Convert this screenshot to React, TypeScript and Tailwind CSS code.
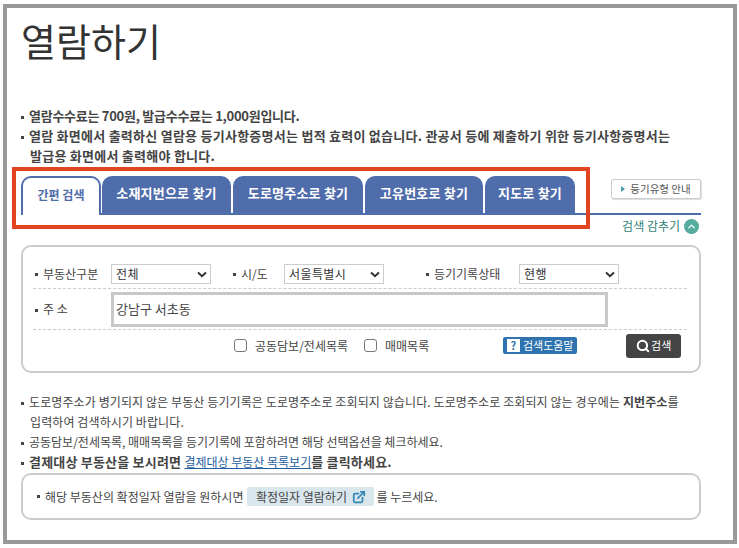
import React from 'react';
import { ChevronUp, ExternalLink, Search } from 'lucide-react';

const FONT = "font-['Noto_Sans_CJK_KR','Noto_Sans',sans-serif]";

const TABS = [
  { label: '소재지번으로 찾기', box: 'ml-[1px] w-[129px]' },
  { label: '도로명주소로 찾기', box: 'ml-[2px] w-[130px]' },
  { label: '고유번호로 찾기', box: 'ml-[2px] w-[118px]' },
  { label: '지도로 찾기', box: 'ml-[2px] w-[90px]' },
];

const Bullet = () => <span className="mr-[5px] inline-block h-[3px] w-[3px] bg-[#444] align-middle" />;

const FakeSelect = ({ value, width }: { value: string; width: string }) => (
  <div className={`flex h-[20px] ${width} items-center justify-between border border-[#ccc] pl-[4px] pr-[2px] text-[12px] tracking-[0.4px] text-[#333]`}>
    <span>{value}</span>
    <svg width="10" height="7" viewBox="0 0 10 7" className="mr-[1px]">
      <path d="M1 1.5 L5 5.2 L9 1.5" fill="none" stroke="#333" strokeWidth="2" />
    </svg>
  </div>
);

const Check = ({ label }: { label: string }) => (
  <label className="flex items-center gap-[8px] text-[12px] text-[#444]">
    <span className="h-[13px] w-[13px] rounded-[3px] border border-[#777] bg-white" />
    {label}
  </label>
);

export default function App() {
  return (
    <div className={`${FONT} relative h-[548px] w-[739px] overflow-hidden bg-white pl-[3px] pt-[4px]`}>
      <div className="h-[540px] w-[734px] border-4 border-[#999] bg-white pl-[14px] pr-[32px]">
        <h1 className="mt-[6px] text-[38px] font-normal leading-[52px] text-[#333]">열람하기</h1>

        <ul className="mt-[40px] text-[13px] font-bold leading-[20px] text-[#444]">
          <li className="pl-[9px] -indent-[9px] tracking-[-0.27px]"><Bullet />열람수수료는 700원, 발급수수료는 1,000원입니다.</li>
          <li className="pl-[9px] -indent-[9px] tracking-[0.25px]">
            <Bullet />열람 화면에서 출력하신 열람용 등기사항증명서는 법적 효력이 없습니다. 관공서 등에 제출하기 위한 등기사항증명서는
            <br />발급용 화면에서 출력해야 합니다.
          </li>
        </ul>

        <div className="mt-[10px] flex items-end border-b-2 border-[#4f6cab]">
          <div className="relative z-10 -mb-[2px] flex h-[39px] w-[80px] items-start justify-center rounded-t-[10px] border-2 border-b-0 border-[#4f6cab] bg-white pt-[8px] text-[12px] font-bold text-[#4f6cab]">
            간편 검색
          </div>
          {TABS.map((tab) => (
            <div key={tab.label} className={`flex h-[37px] ${tab.box} items-start justify-center rounded-t-[10px] bg-[#4f6cab] pt-[7px] text-[13px] font-bold tracking-[0.2px] text-white`}>
              {tab.label}
            </div>
          ))}
          <div className="mb-[14px] ml-auto flex h-[20px] w-[90px] items-center justify-center gap-[5px] rounded-[2px] border border-[#ccc] text-[10.5px] text-[#555] shadow-[1px_1px_1px_#ddd]">
            <span className="h-0 w-0 border-y-[3px] border-l-[4px] border-y-transparent border-l-[#4a9bb0]" />
            등기유형 안내
          </div>
        </div>

        <div className="mt-[2px] flex items-center justify-end gap-[4px] pr-[2px] text-[12px] leading-[18px] text-[#2f7f78]">
          검색 감추기
          <span className="flex h-[15px] w-[15px] items-center justify-center rounded-full bg-[#55ab9c]">
            <ChevronUp size={11} strokeWidth={3} className="text-white" />
          </span>
        </div>

        <div className="mt-[10px] h-[128px] rounded-[10px] border-2 border-[#ccc] pl-[10px] pr-[12px] pt-[17px] text-[12px] text-[#444]">
          <div className="flex h-[25px] items-start border-b border-dashed border-[#ccc]">
            <span className="flex h-[20px] w-[78px] items-center pl-[2px]"><Bullet />부동산구분</span>
            <FakeSelect value="전체" width="w-[100px]" />
            <span className="ml-[22px] flex h-[20px] w-[51px] items-center"><Bullet />시/도</span>
            <FakeSelect value="서울특별시" width="w-[100px]" />
            <span className="ml-[42px] flex h-[20px] w-[93px] items-center"><Bullet />등기기록상태</span>
            <FakeSelect value="현행" width="w-[100px]" />
          </div>
          <div className="flex h-[41px] items-center border-b border-dashed border-[#ccc]">
            <span className="w-[78px] pl-[2px]"><Bullet />주 소</span>
            <div className="flex h-[35px] w-[497px] items-center border-[3px] border-[#c8c8c8] pl-[2px] text-[13px] text-[#444]">강남구 서초동</div>
          </div>
          <div className="flex h-[31px] items-center">
            <div className="ml-[201px] flex gap-[16px]">
              <Check label="공동담보/전세목록" />
              <Check label="매매목록" />
            </div>
            <div className="ml-[74px] flex h-[17px] w-[74px] items-center justify-center gap-[3px] rounded-[2px] bg-[#2f74b0] text-[11px] text-white">
              <span className="flex h-[13px] w-[13px] items-center justify-center bg-white text-[11px] font-bold leading-none text-[#2f74b0]">?</span>
              검색도움말
            </div>
            <div className="ml-[49px] flex h-[24px] w-[55px] items-center justify-center gap-[1px] rounded-[3px] bg-[#444] text-[11px] text-white">
              <Search size={14} strokeWidth={3.5} />
              검색
            </div>
          </div>
        </div>

        <ul className="mt-[19px] text-[12px] leading-[20px] text-[#444]">
          <li className="pl-[9px] -indent-[9px] tracking-[0.1px]">
            <Bullet />도로명주소가 병기되지 않은 부동산 등기기록은 도로명주소로 조회되지 않습니다. 도로명주소로 조회되지 않는 경우에는 <b>지번주소</b>를
            <br />입력하여 검색하시기 바랍니다.
          </li>
          <li className="pl-[9px] -indent-[9px]"><Bullet />공동담보/전세목록, 매매목록을 등기기록에 포함하려면 해당 선택옵션을 체크하세요.</li>
          <li className="pl-[9px] -indent-[9px] text-[13px] font-bold tracking-[0.2px]">
            <Bullet />결제대상 부동산을 보시려면 <a className="text-[12px] font-normal tracking-normal text-[#1f5f9f] underline">결제대상 부동산 목록보기</a>를 클릭하세요.
          </li>
        </ul>

        <div className="mt-[1px] flex h-[47px] items-center rounded-[10px] border-2 border-[#ccc] pl-[14px] text-[12px] text-[#444]">
          <Bullet />해당 부동산의 확정일자 열람을 원하시면
          <span className="ml-[4px] mr-[2px] flex h-[19px] w-[127px] items-center justify-center gap-[5px] rounded-[2px] bg-[#d9e6ec]">
            확정일자 열람하기
            <ExternalLink size={14} strokeWidth={3} className="text-[#3a86b8]" />
          </span>
          를 누르세요.
        </div>
      </div>

      <div className="absolute left-[12px] top-[167px] h-[62px] w-[578px] border-4 border-[#e04420]" />
    </div>
  );
}
